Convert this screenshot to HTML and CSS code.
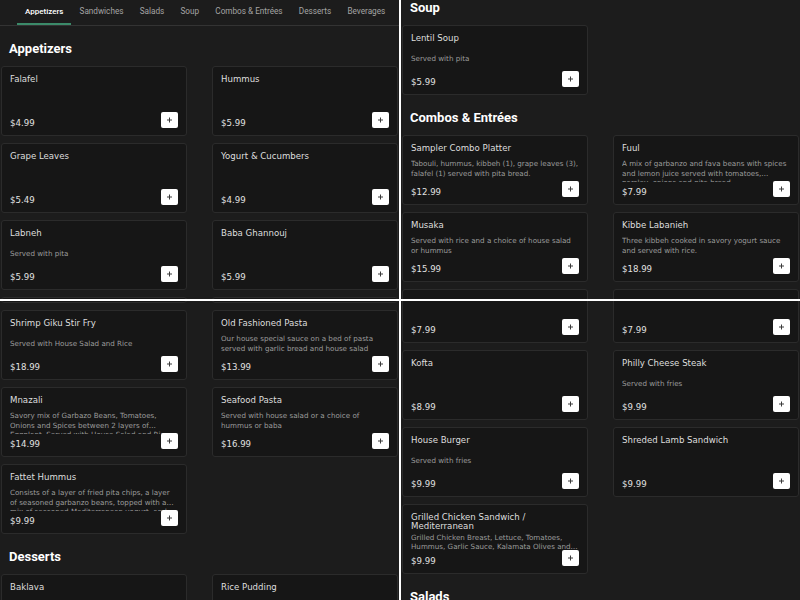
FILE: index.html
```html
<!DOCTYPE html>
<html lang="en">
<head>
<meta charset="utf-8">
<title>Menu</title>
<link rel="stylesheet" href="styles.css">
</head>
<body>
<div class="mosaic">

  <!-- Panel 1 : top of the page -->
  <section class="panel">
    <nav class="tabs">
      <a class="tab active">Appetizers</a>
      <a class="tab">Sandwiches</a>
      <a class="tab">Salads</a>
      <a class="tab">Soup</a>
      <a class="tab">Combos &amp; Entrées</a>
      <a class="tab">Desserts</a>
      <a class="tab">Beverages</a>
    </nav>
    <div class="section">
      <h2>Appetizers</h2>
      <div class="grid">
        <article class="card"><h3 class="name">Falafel</h3><div class="foot"><span class="price">$4.99</span><button class="add"><svg viewBox="0 0 17 16"><path d="M8.5 5.5v5M6 8h5"/></svg></button></div></article>
        <article class="card"><h3 class="name">Hummus</h3><div class="foot"><span class="price">$5.99</span><button class="add"><svg viewBox="0 0 17 16"><path d="M8.5 5.5v5M6 8h5"/></svg></button></div></article>
        <article class="card"><h3 class="name">Grape Leaves</h3><div class="foot"><span class="price">$5.49</span><button class="add"><svg viewBox="0 0 17 16"><path d="M8.5 5.5v5M6 8h5"/></svg></button></div></article>
        <article class="card"><h3 class="name">Yogurt &amp; Cucumbers</h3><div class="foot"><span class="price">$4.99</span><button class="add"><svg viewBox="0 0 17 16"><path d="M8.5 5.5v5M6 8h5"/></svg></button></div></article>
        <article class="card"><h3 class="name">Labneh</h3><p class="desc">Served with pita</p><div class="foot"><span class="price">$5.99</span><button class="add"><svg viewBox="0 0 17 16"><path d="M8.5 5.5v5M6 8h5"/></svg></button></div></article>
        <article class="card"><h3 class="name">Baba Ghannouj</h3><div class="foot"><span class="price">$5.99</span><button class="add"><svg viewBox="0 0 17 16"><path d="M8.5 5.5v5M6 8h5"/></svg></button></div></article>
        <article class="card"></article>
        <article class="card"></article>
      </div>
    </div>
  </section>

  <!-- Panel 2 : Soup / Combos -->
  <section class="panel">
    <div class="section flush">
      <h2>Soup</h2>
      <div class="grid">
        <article class="card"><h3 class="name">Lentil Soup</h3><p class="desc">Served with pita</p><div class="foot"><span class="price">$5.99</span><button class="add"><svg viewBox="0 0 17 16"><path d="M8.5 5.5v5M6 8h5"/></svg></button></div></article>
      </div>
    </div>
    <div class="section">
      <h2>Combos &amp; Entrées</h2>
      <div class="grid">
        <article class="card"><h3 class="name">Sampler Combo Platter</h3><p class="desc">Tabouli, hummus, kibbeh (1), grape leaves (3), falafel (1) served with pita bread.</p><div class="foot"><span class="price">$12.99</span><button class="add"><svg viewBox="0 0 17 16"><path d="M8.5 5.5v5M6 8h5"/></svg></button></div></article>
        <article class="card"><h3 class="name">Fuul</h3><p class="desc">A mix of garbanzo and fava beans with spices and lemon juice served with tomatoes, parsley, onions and pita bread</p><div class="foot"><span class="price">$7.99</span><button class="add"><svg viewBox="0 0 17 16"><path d="M8.5 5.5v5M6 8h5"/></svg></button></div></article>
        <article class="card"><h3 class="name">Musaka</h3><p class="desc">Served with rice and a choice of house salad or hummus</p><div class="foot"><span class="price">$15.99</span><button class="add"><svg viewBox="0 0 17 16"><path d="M8.5 5.5v5M6 8h5"/></svg></button></div></article>
        <article class="card"><h3 class="name">Kibbe Labanieh</h3><p class="desc">Three kibbeh cooked in savory yogurt sauce and served with rice.</p><div class="foot"><span class="price">$18.99</span><button class="add"><svg viewBox="0 0 17 16"><path d="M8.5 5.5v5M6 8h5"/></svg></button></div></article>
        <article class="card"></article>
        <article class="card"></article>
      </div>
    </div>
  </section>

  <!-- Panel 3 : more Combos / Desserts -->
  <section class="panel">
    <div class="section flush">
      <div class="grid scrolled-a">
        <article class="card"></article>
        <article class="card"></article>
        <article class="card"><h3 class="name">Shrimp Giku Stir Fry</h3><p class="desc">Served with House Salad and Rice</p><div class="foot"><span class="price">$18.99</span><button class="add"><svg viewBox="0 0 17 16"><path d="M8.5 5.5v5M6 8h5"/></svg></button></div></article>
        <article class="card"><h3 class="name">Old Fashioned Pasta</h3><p class="desc">Our house special sauce on a bed of pasta served with garlic bread and house salad</p><div class="foot"><span class="price">$13.99</span><button class="add"><svg viewBox="0 0 17 16"><path d="M8.5 5.5v5M6 8h5"/></svg></button></div></article>
        <article class="card"><h3 class="name">Mnazali</h3><p class="desc">Savory mix of Garbazo Beans, Tomatoes, Onions and Spices between 2 layers of Eggplant. Served with House Salad and Rice</p><div class="foot"><span class="price">$14.99</span><button class="add"><svg viewBox="0 0 17 16"><path d="M8.5 5.5v5M6 8h5"/></svg></button></div></article>
        <article class="card"><h3 class="name">Seafood Pasta</h3><p class="desc">Served with house salad or a choice of hummus or baba</p><div class="foot"><span class="price">$16.99</span><button class="add"><svg viewBox="0 0 17 16"><path d="M8.5 5.5v5M6 8h5"/></svg></button></div></article>
        <article class="card"><h3 class="name">Fattet Hummus</h3><p class="desc">Consists of a layer of fried pita chips, a layer of seasoned garbanzo beans, topped with a mix of seasoned Mediterranean yogurt, and pine nuts</p><div class="foot"><span class="price">$9.99</span><button class="add"><svg viewBox="0 0 17 16"><path d="M8.5 5.5v5M6 8h5"/></svg></button></div></article>
      </div>
    </div>
    <div class="section">
      <h2>Desserts</h2>
      <div class="grid">
        <article class="card"><h3 class="name">Baklava</h3></article>
        <article class="card"><h3 class="name">Rice Pudding</h3></article>
      </div>
    </div>
  </section>

  <!-- Panel 4 : Sandwiches -->
  <section class="panel">
    <div class="section flush">
      <div class="grid scrolled-b">
        <article class="card"><div class="foot"><span class="price">$7.99</span><button class="add"><svg viewBox="0 0 17 16"><path d="M8.5 5.5v5M6 8h5"/></svg></button></div></article>
        <article class="card"><div class="foot"><span class="price">$7.99</span><button class="add"><svg viewBox="0 0 17 16"><path d="M8.5 5.5v5M6 8h5"/></svg></button></div></article>
        <article class="card"><h3 class="name">Kofta</h3><div class="foot"><span class="price">$8.99</span><button class="add"><svg viewBox="0 0 17 16"><path d="M8.5 5.5v5M6 8h5"/></svg></button></div></article>
        <article class="card"><h3 class="name">Philly Cheese Steak</h3><p class="desc">Served with fries</p><div class="foot"><span class="price">$9.99</span><button class="add"><svg viewBox="0 0 17 16"><path d="M8.5 5.5v5M6 8h5"/></svg></button></div></article>
        <article class="card"><h3 class="name">House Burger</h3><p class="desc">Served with fries</p><div class="foot"><span class="price">$9.99</span><button class="add"><svg viewBox="0 0 17 16"><path d="M8.5 5.5v5M6 8h5"/></svg></button></div></article>
        <article class="card"><h3 class="name">Shreded Lamb Sandwich</h3><div class="foot"><span class="price">$9.99</span><button class="add"><svg viewBox="0 0 17 16"><path d="M8.5 5.5v5M6 8h5"/></svg></button></div></article>
        <article class="card"><h3 class="name">Grilled Chicken Sandwich / Mediterranean</h3><p class="desc tight">Grilled Chicken Breast, Lettuce, Tomatoes, Hummus, Garlic Sauce, Kalamata Olives and Pickles</p><div class="foot"><span class="price">$9.99</span><button class="add"><svg viewBox="0 0 17 16"><path d="M8.5 5.5v5M6 8h5"/></svg></button></div></article>
      </div>
    </div>
    <div class="section">
      <h2>Salads</h2>
    </div>
  </section>

</div>
</body>
</html>
```

FILE: styles.css
```css
* { box-sizing: border-box; }

html, body {
  margin: 0;
  padding: 0;
  background: #ffffff;
}

.mosaic {
  display: grid;
  grid-template-columns: 399px 399px;
  grid-template-rows: 299px 299px;
  gap: 2px;
  width: 800px;
  height: 600px;
}

.panel {
  background: #1c1c1c;
  overflow: hidden;
  font-family: "DejaVu Sans", sans-serif;
}

/* tab bar */
.tabs {
  display: flex;
  height: 26px;
  padding-left: 17px;
  border-bottom: 1px solid #333333;
  font-family: Roboto, "Liberation Sans", sans-serif;
  font-size: 8.2px;
}

.tab {
  display: flex;
  align-items: center;
  height: 25px;
  padding: 0 8.1px 1px;
  border-bottom: 2px solid transparent;
  color: #a4a4a4;
  white-space: nowrap;
}

.tab.active {
  color: #ffffff;
  font-weight: 500;
  font-size: 8px;
  padding: 0 8px 1px;
  border-bottom-color: #3b8a69;
}

/* sections */
.section {
  margin-top: 15px;
}

.section.flush {
  margin-top: 0;
}

.section h2 {
  margin: 0 0 10px;
  padding-left: 9px;
  font-family: Roboto, "Liberation Sans", sans-serif;
  font-weight: 700;
  font-size: 13px;
  line-height: 15px;
  color: #ffffff;
}

.grid {
  display: grid;
  grid-template-columns: 186px 186px;
  column-gap: 25px;
  row-gap: 7px;
  margin-left: 1px;
}

.grid.scrolled-a { margin-top: -68px; }
.grid.scrolled-b { margin-top: -28px; }

/* cards */
.card {
  height: 70px;
  display: flex;
  flex-direction: column;
  justify-content: space-between;
  padding: 8px 8px 7px 8px;
  background: #161616;
  border: 1px solid #2b2b2b;
  border-radius: 3px;
}

.name {
  margin: 0;
  font-size: 8.6px;
  line-height: 9px;
  font-weight: 400;
  color: #dedede;
}

.desc {
  margin: 0 0 -4px;
  padding-bottom: 4px;
  font-size: 7.15px;
  line-height: 9.5px;
  color: #9c9c9c;
  display: -webkit-box;
  -webkit-box-orient: vertical;
  -webkit-line-clamp: 2;
  overflow: hidden;
}

.desc.tight {
  padding-bottom: 0;
  margin-bottom: 0;
}

.foot {
  display: flex;
  justify-content: space-between;
  align-items: flex-end;
  margin-top: auto;
}

.card .desc + .foot,
.card .name + .foot { margin-top: 0; }

.price {
  font-size: 8.6px;
  line-height: 10px;
  color: #e2e2e2;
}

.add {
  width: 17px;
  height: 16px;
  margin-top: -3px;
  padding: 0;
  border: none;
  border-radius: 2px;
  background: #ffffff;
  display: flex;
}

.add svg {
  width: 17px;
  height: 16px;
  fill: none;
  stroke: #3a3a3a;
  stroke-width: 1;
}
```
